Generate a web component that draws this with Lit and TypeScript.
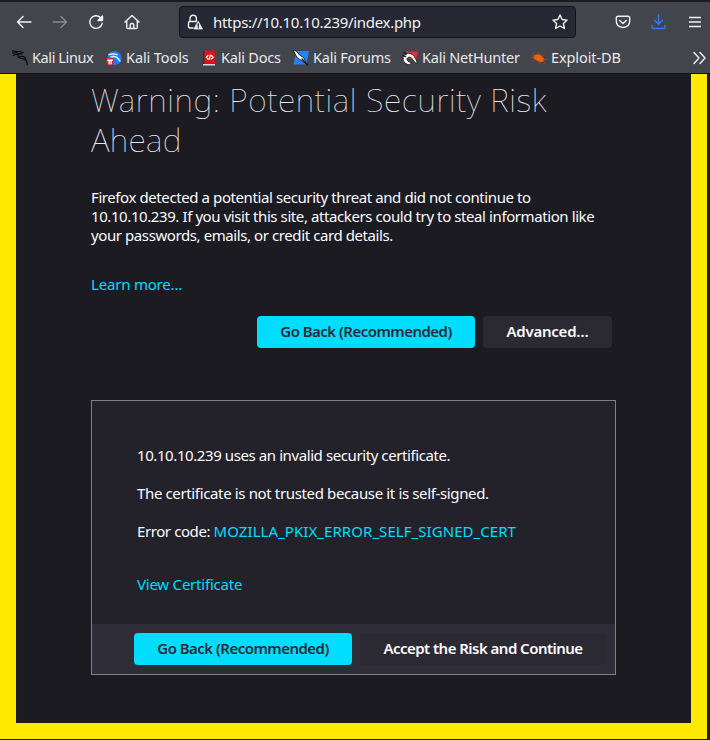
import { LitElement, html, css, svg } from "lit";
import { customElement } from "lit/decorators.js";

const kaliIcon = svg`
  <path d="M.3.8 4 1.300l4 .2 3 1.300M.8 3.200 5 2.300M1.500 5.500 4 4.300l3.500-1L10 4M6.500 4.500C5.500 7 6.500 8 9 8.300c3 .4 4.800 1.200 5.500 3l.8 3.400M8 6.500c3-.8 5.500.5 6 3.200" fill="none" stroke="#08090b" stroke-width="1.200"/>`;
const toolsIcon = svg`
  <circle cx="8.500" cy="8" r="7" fill="#2777ff"/>
  <path d="M3 4.500c3-.8 6-.8 8 .2M5 7c3-1 6 0 7 1.500s1 1.500 2 2.500" fill="none" stroke="#dcecff" stroke-width="1.500"/>
  <circle cx="4" cy="11.500" r="3.900" fill="#e21f26"/>
  <path d="M1.800 10.300h4.600M3.200 10.300v3.400M5.200 10.300v3.400" stroke="#fff" fill="none"/>`;
const docsIcon = svg`
  <path d="M2 1h1.500v13H2z" fill="#760d14"/><path d="M3.500.5H14v13H3.500z" fill="#d9151b"/>
  <path d="M2 14h12v1.500H2z" fill="#d8d8dc"/>
  <path d="M7 5.500 5.300 7.200 7 9M10.500 5.500l1.700 1.700L10.500 9M9.300 5l-1 4.500" fill="none" stroke="#fff" stroke-width="1.200"/>`;
const forumsIcon = svg`
  <path d="M3.500 1H16l-2.500 13.500H.5z" fill="#2682fa"/>
  <path d="M.5.5 3.500 1l3 4 4 2.500 4 7.500-6-4.500L4.500 8z" fill="#fff" stroke="#15181d" stroke-width=".9"/>
  <path d="m9 9 5.500 6" stroke="#15181d"/>`;
const hunterIcon = svg`
  <path d="M4 1.500h12L13.500 12 8 9z" fill="#ed2b36"/>
  <path d="M1 8.500C.5 5 4 2.500 8 3.500c4 1 5.500 4.500 7.500 10-3-.5-4.500-3.500-5.500-5-1.500-2-4.800-1.500-5 .5-.1 2 1.700 3 4.500 3.500l-1.500 2.300C3.500 14.500 1.200 12 1 8.500z" fill="#fff" stroke="#1d1b1f" stroke-width=".9"/>
  <path d="m.5 5.500 3 1M2 2.500l2 2" stroke="#1d1b1f"/>`;
const exploitIcon = svg`
  <path d="M2.500 5.500 6 4.200l4 1 3 3.300-.5 3-3 .7-3-1.200L3 9z" fill="#f0600f"/>
  <path d="m1.500 3.500 2.500 2M.5 7.500l3-.5M2 11l3-1.500M7.500 2.500l1 2.500M12.500 5.500l-1.500 1M15.500 9.500H12M14 13.500l-2-2.500M8 14l1-2.500" stroke="#a64a1e" fill="none" stroke-width=".8"/>`;

const bookmarks = [
  { label: "Kali Linux", icon: kaliIcon, cls: "tight" },
  { label: "Kali Tools", icon: toolsIcon, cls: "loose" },
  { label: "Kali Docs", icon: docsIcon, cls: "" },
  { label: "Kali Forums", icon: forumsIcon, cls: "" },
  { label: "Kali NetHunter", icon: hunterIcon, cls: "" },
  { label: "Exploit-DB", icon: exploitIcon, cls: "loose" },
];

@customElement("browser-chrome")
export class BrowserChrome extends LitElement {
  static styles = css`
    :host { display: block; height: 74px; box-sizing: border-box; background: #42454c; border-top: 2px solid #1c1b22; border-bottom: 1px solid #121318; color: #f2f2f4; }
    svg { display: block; flex: none; fill: none; stroke: #f2f2f4; stroke-width: 1.4; stroke-linecap: round; stroke-linejoin: round; }
    .nav { display: flex; align-items: center; height: 40px; padding: 0 7px 0 16px; }
    .nav > svg { margin-right: 20px; }
    .nav .dim { opacity: .4; }
    .url { display: flex; align-items: center; box-sizing: border-box; width: 397px; height: 32px; margin: 0 39px 0 19px; padding: 0 7px; border: 1px solid #12131a; border-radius: 4px; background: #262833; font-size: 15px; letter-spacing: -.3px; }
    .url span { flex: 1; margin-left: 10px; white-space: nowrap; }
    .nav .blue { stroke: #2d7bf5; }
    .nav .last { margin-right: 0; }
    .marks { display: grid; grid-template-columns: 94px 95px 92px 109px 129px 1fr 16px; height: 31px; align-items: center; padding: 0 3px 0 12px; font-size: 14.5px; letter-spacing: -.22px; color: #e9e9ec; }
    .mark { display: flex; align-items: center; gap: 4px; white-space: nowrap; }
    .mark svg { stroke: none; }
    .tight { letter-spacing: -.4px; }
    .loose { letter-spacing: -.1px; }
  `;
  render() {
    return html`
      <div class="nav">
        <svg width="16" height="16"><path d="M15 8H1.500M7 2.500 1.500 8 7 13.500"/></svg>
        <svg class="dim" width="16" height="16"><path d="M1 8h13.500M9 2.500 14.500 8 9 13.500"/></svg>
        <svg width="16" height="16"><path d="M14.200 9.500A6.300 6.300 0 1 1 12.400 3.500"/><path d="M14.500 2v4.500H10z" fill="#f2f2f4"/></svg>
        <svg width="16" height="16"><path d="M1 8 8 1.500 15 8M2.700 7v6.500q0 1 1 1h8.600q1 0 1-1V7M6.200 14.500V11q0-1.500 1.800-1.500T9.800 11v3.500"/></svg>
        <div class="url">
          <svg width="16" height="16"><path d="M6 14H3q-1.500 0-1.500-1.500V9Q1.500 7.500 3 7.500h6M3 7.500V5Q3 1.300 6.200 1.300T9.400 5v2"/><path d="m11.300 7.500 4.200 7.500H7.200z" fill="#f2f2f4" stroke-width=".8"/><path d="M11.300 10v2.200M11.300 13.800v.1" stroke="#262833"/></svg>
          <span>https://10.10.10.239/index.php</span>
          <svg width="16" height="16"><path d="m8 1 2.100 4.500 5 .6-3.700 3.400 1 5L8 12l-4.400 2.500 1-5L.9 6.100l5-.6z"/></svg>
        </div>
        <svg width="16" height="16"><path d="M1.300 4q0-1.800 1.800-1.800h9.800q1.800 0 1.800 1.800v3q0 6-6.700 6.500Q1.300 13 1.300 7zM4.700 6.500 8 9.500l3.300-3"/></svg>
        <svg class="blue" width="16" height="16"><path d="M7.500.8V10M3.500 6.200l4 4 4-4M1 11.500V13q0 1.500 1.500 1.500h10Q14 14.500 14 13v-1.500"/></svg>
        <svg class="last" width="16" height="16"><path d="M2 3.500h12M2 8h12M2 12.500h12" stroke-linecap="butt"/></svg>
      </div>
      <div class="marks">
        ${bookmarks.map((b) => html`<div class="mark"><svg width="16" height="16" viewBox="0 0 16 16">${b.icon}</svg><span class=${b.cls}>${b.label}</span></div>`)}
        <svg width="16" height="16"><path d="m3 2.500 5 5.500-5 5.500M9 2.500l5 5.500-5 5.500"/></svg>
      </div>`;
  }
}

@customElement("app-root")
export class AppRoot extends LitElement {
  static styles = css`
    :host { display: block; width: 710px; height: 740px; overflow: hidden; background: #1c1b22; font-family: "Noto Sans", sans-serif; font-size: 15px; line-height: 19px; color: #fbfbfe; }
    .page { box-sizing: border-box; width: 707px; height: 665px; border: 16px solid #ffe900; border-top: 0; padding: 6px 75px 0; }
    h1 { margin: 0; font-weight: 100; font-size: 32px; line-height: 40px; color: #e6e6ec; white-space: nowrap; letter-spacing: .6px; }
    h1 span { display: block; }
    h1 span + span { letter-spacing: .3px; }
    p { margin: 0; white-space: nowrap; letter-spacing: -.41px; }
    .intro { margin-top: 28px; }
    .intro span { display: block; }
    .link { color: #00ddff; }
    .learn { margin-top: 30px; letter-spacing: -.2px; }
    .code { letter-spacing: .06px; }
    .signed { letter-spacing: -.36px; }
    .buttons { display: flex; gap: 8px; justify-content: flex-end; margin: 22px 4px 0 0; }
    button { box-sizing: border-box; width: 218px; height: 32px; padding: 0 0 2px; border: 0; border-radius: 4px; background: #2b2a33; color: #fbfbfe; font-family: inherit; font-size: 15px; font-weight: 600; letter-spacing: -.53px; white-space: nowrap; }
    .primary { background: #00ddff; color: #2b2a33; }
    .adv { width: 129px; letter-spacing: -.22px; }
    .accept { width: 246px; }
    .panel { box-sizing: border-box; width: 525px; height: 275px; margin-top: 52px; border: 1px solid #80808a; background: #23222b; display: flex; flex-direction: column; }
    .details { flex: 1; padding: 45px 45px 0; }
    .details p + p { margin-top: 19px; }
    .details .view { margin-top: 34px; letter-spacing: -.22px; }
    .foot { display: flex; gap: 8px; height: 50px; box-sizing: border-box; background: #2e2d37; padding: 9px 0 0 42px; }
  `;
  render() {
    return html`
      <browser-chrome></browser-chrome>
      <div class="page">
        <h1><span>Warning: Potential Security Risk</span><span>Ahead</span></h1>
        <p class="intro"><span>Firefox detected a potential security threat and did not continue to</span><span>10.10.10.239. If you visit this site, attackers could try to steal information like</span><span>your passwords, emails, or credit card details.</span></p>
        <p class="learn link">Learn more…</p>
        <div class="buttons"><button class="primary">Go Back (Recommended)</button><button class="adv">Advanced…</button></div>
        <div class="panel">
          <div class="details">
            <p>10.10.10.239 uses an invalid security certificate.</p>
            <p class="signed">The certificate is not trusted because it is self-signed.</p>
            <p>Error code: <span class="link code">MOZILLA_PKIX_ERROR_SELF_SIGNED_CERT</span></p>
            <p class="view link">View Certificate</p>
          </div>
          <div class="foot"><button class="primary">Go Back (Recommended)</button><button class="accept">Accept the Risk and Continue</button></div>
        </div>
      </div>`;
  }
}
